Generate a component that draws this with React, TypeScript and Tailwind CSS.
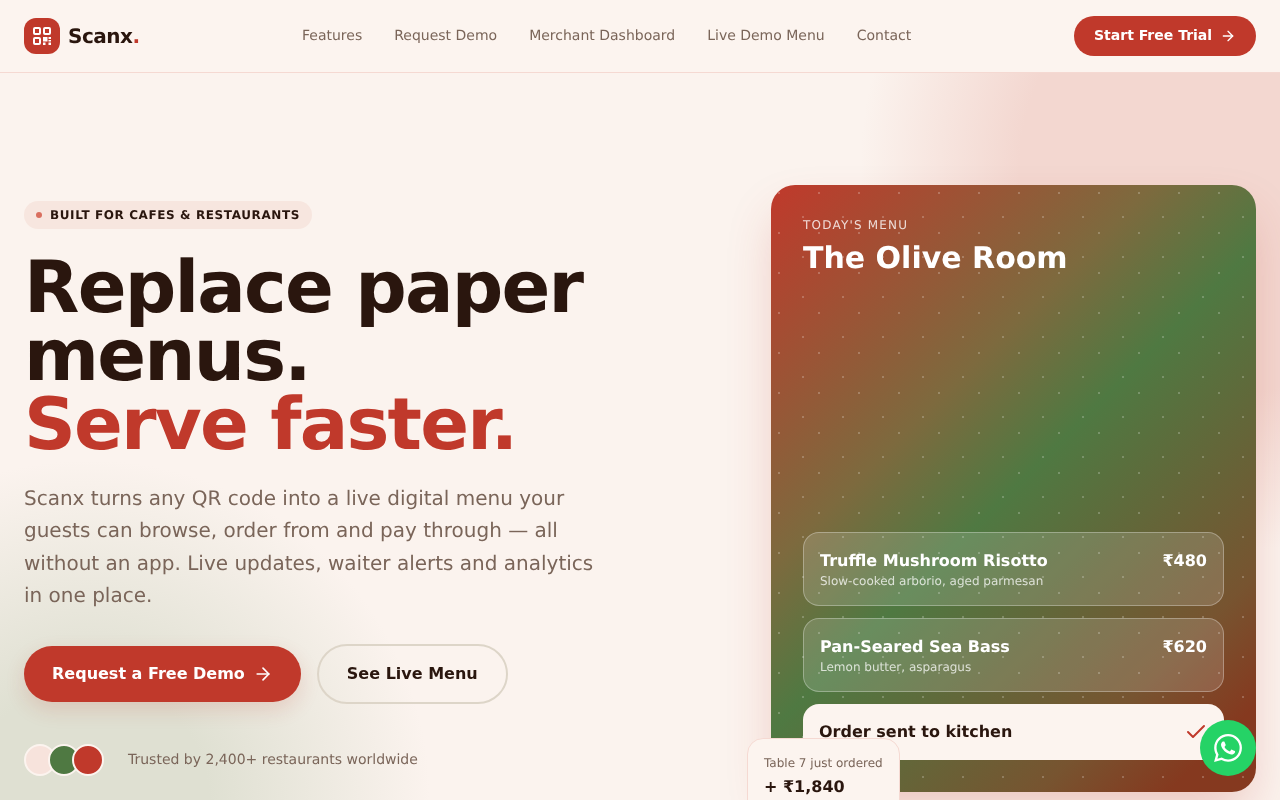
import { ArrowRight, Check } from "lucide-react"
import { SiWhatsapp } from "react-icons/si"

const navLinks = ["Features", "Request Demo", "Merchant Dashboard", "Live Demo Menu", "Contact"]

const dishes = [
  { name: "Truffle Mushroom Risotto", note: "Slow-cooked arborio, aged parmesan", price: "₹480" },
  { name: "Pan-Seared Sea Bass", note: "Lemon butter, asparagus", price: "₹620" },
]

function LogoMark() {
  return (
    <svg viewBox="0 0 24 24" className="h-6 w-6 text-white" fill="none" stroke="currentColor" strokeWidth="2">
      <rect x="4" y="4" width="6" height="6" rx="1" />
      <rect x="14" y="4" width="6" height="6" rx="1" />
      <rect x="4" y="14" width="6" height="6" rx="1" />
      <g fill="currentColor" stroke="none">
        <rect x="13" y="13" width="4.5" height="4.5" />
        <rect x="18.5" y="13" width="2.5" height="2" />
        <rect x="18.5" y="16" width="2.5" height="1.5" />
        <rect x="13" y="18.5" width="2.5" height="2.5" />
        <rect x="18.5" y="18.5" width="2.5" height="2.5" />
      </g>
    </svg>
  )
}

export default function App() {
  return (
    <div className="relative h-screen overflow-hidden bg-[#fbf3ee] font-['DejaVu_Sans',sans-serif] text-[#2a160e] [text-rendering:geometricPrecision]">
      {/* soft background blobs */}
      <div className="absolute right-[-340px] top-[-210px] h-[760px] w-[760px] rounded-full bg-[radial-gradient(circle_closest-side,#f3d7d0_0%,#f3d7d0_58%,#f3d7d000_100%)]" />
      <div className="absolute bottom-[-340px] left-[-250px] h-[680px] w-[680px] rounded-full bg-[radial-gradient(circle_closest-side,#dfe0d2_0%,#dfe0d2_35%,#dfe0d200_100%)]" />

      <header className="relative z-10 flex h-[73px] items-center justify-between border-b border-[#f5d9d2] bg-[#fcf4ef] px-6">
        <div className="flex items-center gap-2">
          <div className="flex h-9 w-9 items-center justify-center rounded-xl bg-[#c0392b]">
            <LogoMark />
          </div>
          <span className="text-xl font-bold tracking-tight will-change-transform">
            Scanx<span className="text-[#c0392b]">.</span>
          </span>
        </div>
        <nav className="flex gap-8 text-sm text-[#7a6559] will-change-transform">
          {navLinks.map((link) => (
            <a key={link} href="#">
              {link}
            </a>
          ))}
        </nav>
        <button className="flex h-10 items-center gap-2 rounded-full bg-[#c0392b] px-5 text-sm font-bold text-white will-change-transform">
          <span className="-mt-0.5">Start Free Trial</span>
          <ArrowRight className="h-4 w-4" />
        </button>
      </header>

      <main className="relative grid grid-cols-[1fr_485px] items-center gap-10 px-6 py-28">
        <div className="will-change-transform">
          <div className="inline-flex h-7 items-center gap-2 rounded-full bg-[#f7e6df] px-3 text-xs font-bold tracking-wider">
            <span className="h-1.5 w-1.5 rounded-full bg-[#d96f5f]" />
            BUILT FOR CAFES &amp; RESTAURANTS
          </div>
          <h1 className="mt-6 text-7xl leading-[0.95] font-bold tracking-tight">
            Replace paper menus.
            <span className="block text-[#c0392b]">Serve faster.</span>
          </h1>
          <p className="mt-[23.7px] max-w-xl text-xl leading-relaxed text-[#7a6559]">
            Scanx turns any QR code into a live digital menu your guests can browse, order from and pay through — all
            without an app. Live updates, waiter alerts and analytics in one place.
          </p>
          <div className="mt-[32.3px] flex items-center gap-4">
            <button className="flex h-14 items-center gap-2 rounded-full bg-[#c0392b] px-7 font-bold text-white shadow-[0_8px_20px_rgba(192,57,43,0.15)]">
              Request a Free Demo
              <ArrowRight className="h-5 w-5" />
            </button>
            <button className="h-[60px] rounded-full border-2 border-[#ddd5c8] px-7 font-bold">See Live Menu</button>
          </div>
          <div className="mt-10 flex items-center gap-6">
            <div className="flex -space-x-2">
              <span className="h-8 w-8 rounded-full border-2 border-[#fcf4ef] bg-[#f7e3dc]" />
              <span className="h-8 w-8 rounded-full border-2 border-[#fcf4ef] bg-[#4f7942]" />
              <span className="h-8 w-8 rounded-full border-2 border-[#fcf4ef] bg-[#c0392b]" />
            </div>
            <span className="text-sm text-[#7a6559]">Trusted by 2,400+ restaurants worldwide</span>
          </div>
        </div>

        <div className="relative h-[607px] rounded-3xl shadow-[0_25px_50px_-8px_rgba(192,57,43,0.25)] will-change-transform">
          <div className="flex h-full flex-col rounded-3xl bg-[linear-gradient(135deg,#c0392b_0%,#7d6a3e_35%,#4f7942_50%,#775430_80%,#85391f_92%,#85391f_100%)] p-8 text-white">
            <div className="absolute inset-0 rounded-3xl bg-[radial-gradient(circle,rgba(255,255,255,0.22)_1px,transparent_1.2px),radial-gradient(circle,rgba(255,255,255,0.22)_1px,transparent_1.2px)] bg-[size:40px_40px] bg-[position:-12px_-12px,12px_12px]" />
            <div className="relative text-xs tracking-widest text-white/80">TODAY&apos;S MENU</div>
            <div className="relative mt-2 text-3xl font-bold">The Olive Room</div>
            <div className="relative mt-auto flex flex-col gap-3">
              {dishes.map((dish) => (
                <div
                  key={dish.name}
                  className="flex h-[74px] items-start justify-between rounded-2xl border border-white/30 bg-white/15 p-4"
                >
                  <div>
                    <div className="font-bold leading-6">{dish.name}</div>
                    <div className="text-xs text-white/75">{dish.note}</div>
                  </div>
                  <div className="font-bold leading-6">{dish.price}</div>
                </div>
              ))}
              <div className="flex h-14 items-center justify-between rounded-2xl bg-[#fcf4ef] px-4 text-[#2a160e]">
                <span className="font-bold">Order sent to kitchen</span>
                <Check className="h-6 w-6 text-[#c0392b]" />
              </div>
            </div>
          </div>
          <div className="absolute -bottom-6 -left-6 rounded-2xl border border-[#f5d9d2] bg-[#fcf4ef] p-4">
            <div className="text-xs text-[#7a6559]">Table 7 just ordered</div>
            <div className="mt-1 font-bold">+ ₹1,840</div>
          </div>
        </div>
      </main>

      <button className="fixed bottom-6 right-6 flex h-14 w-14 items-center justify-center rounded-full bg-[#25d366] text-white">
        <SiWhatsapp className="h-7 w-7" />
      </button>
    </div>
  )
}
